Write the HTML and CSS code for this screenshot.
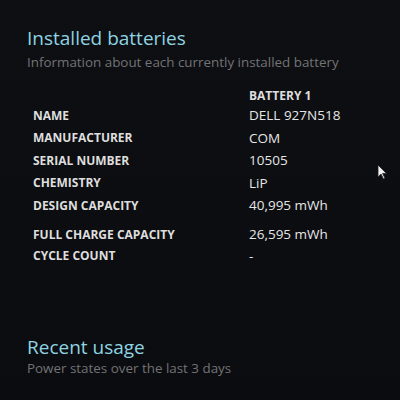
FILE: index.html
```html
<!DOCTYPE html>
<html>
<head>
<meta charset="utf-8">
<link rel="stylesheet" href="styles.css">
</head>
<body>
<div class="page">
  <section class="sec first">
    <h1 class="title">Installed batteries</h1>
    <p class="sub">Information about each currently installed battery</p>
    <div class="table">
      <div class="row head"><span class="lab"></span><span class="val colhead">BATTERY 1</span></div>
      <div class="row"><span class="lab">NAME</span><span class="val">DELL 927N518</span></div>
      <div class="row"><span class="lab">MANUFACTURER</span><span class="val">COM</span></div>
      <div class="row"><span class="lab">SERIAL NUMBER</span><span class="val">10505</span></div>
      <div class="row"><span class="lab">CHEMISTRY</span><span class="val">LiP</span></div>
      <div class="row"><span class="lab">DESIGN CAPACITY</span><span class="val">40,995 mWh</span></div>
      <div class="row gap"><span class="lab">FULL CHARGE CAPACITY</span><span class="val">26,595 mWh</span></div>
      <div class="row"><span class="lab">CYCLE COUNT</span><span class="val">-</span></div>
    </div>
  </section>
  <section class="sec second">
    <h1 class="title">Recent usage</h1>
    <p class="sub sub2">Power states over the last 3 days</p>
    <div class="row head2"><span class="lab">START TIME</span><span class="lab state">STATE</span></div>
  </section>
  <svg class="cursor" width="10" height="16" viewBox="0 0 10 16"><path d="M1 1 L1 13 L4 10 L6.5 15 L8 14.3 L5.6 9.4 L9.5 9.4 Z" fill="#f2f2f2" stroke="#222" stroke-width="0.8"/></svg>
</div>
</body>
</html>
```
FILE: styles.css
```css
html, body {
  margin: 0;
  padding: 0;
  background: #0c0d10;
}
.page {
  position: relative;
  width: 400px;
  height: 400px;
  overflow: hidden;
  background: linear-gradient(180deg, #0e0f12 0%, #0b0c0f 100%);
  font-family: "Open Sans", "Noto Sans", sans-serif;
}
.sec {
  display: flex;
  flex-direction: column;
  padding-left: 27px;
}
.first { padding-top: 26px; }
.second { padding-top: 68px; }
.title {
  margin: 0;
  font-size: 19px;
  font-weight: 500;
  color: #8ed4e2;
  line-height: 24px;
  letter-spacing: 0;
}
.sub {
  margin: 2px 0 0;
  font-size: 13.4px;
  color: #727376;
  line-height: 20px;
}
.sub2 { margin-top: -1px; }
.table {
  display: flex;
  flex-direction: column;
  padding-left: 6px;
  margin-top: 14px;
}
.row {
  display: flex;
  align-items: center;
  height: 22.5px;
}
.row.gap { margin-top: 7px; height: 21px; }
.lab {
  width: 216px;
  flex: none;
  font-size: 12px;
  font-weight: 700;
  color: #dedede;
}
.val {
  font-size: 13.5px;
  color: #e6e6e6;
}
.colhead {
  font-size: 12px;
  font-weight: 700;
  color: #dedede;
}
.head { height: 18px; }
.head2 {
  padding-left: 6px;
  margin-top: 16px;
}
.state { width: auto; padding-left: 23px; }
.cursor {
  position: absolute;
  left: 377px;
  top: 164px;
}
```
